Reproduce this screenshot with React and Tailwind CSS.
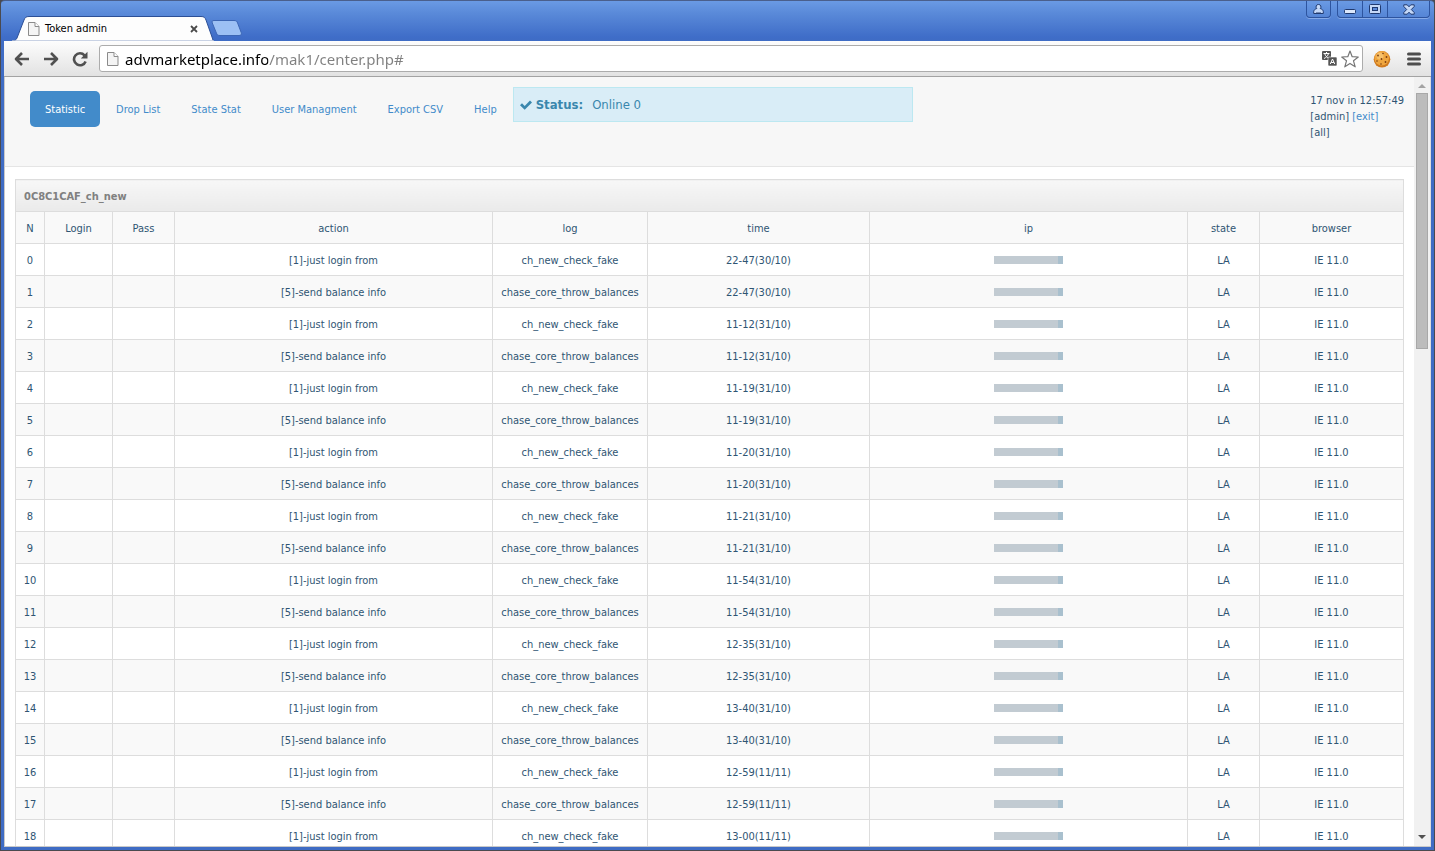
import React, { useState } from 'react';

const navItems = ['Statistic', 'Drop List', 'State Stat', 'User Managment', 'Export CSV', 'Help'];

const columns = [
  { label: 'N', width: 'w-[29px]' },
  { label: 'Login', width: 'w-[68px]' },
  { label: 'Pass', width: 'w-[62px]' },
  { label: 'action', width: '' },
  { label: 'log', width: 'w-[155px]' },
  { label: 'time', width: 'w-[222px]' },
  { label: 'ip', width: '' },
  { label: 'state', width: 'w-[72px]' },
  { label: 'browser', width: 'w-[144px]' },
];

// Each login check is followed by a balance report at the same time
const times = [
  '22-47(30/10)',
  '11-12(31/10)',
  '11-19(31/10)',
  '11-20(31/10)',
  '11-21(31/10)',
  '11-54(31/10)',
  '12-35(31/10)',
  '13-40(31/10)',
  '12-59(11/11)',
  '13-00(11/11)',
];

const rows = times.flatMap((time) => [
  { action: '[1]-just login from', log: 'ch_new_check_fake', time },
  { action: '[5]-send balance info', log: 'chase_core_throw_balances', time },
]).slice(0, 19);

const PageIcon = () => (
  <svg className="w-3 h-[15px] shrink-0" viewBox="0 0 12 15" fill="none">
    <path d="M.5 1.500h6.500l4 4v9H.5z" fill="#f4f4f4" stroke="#8b8b8b" />
    <path d="M7 1.500v4h4" fill="#fff" stroke="#8b8b8b" />
  </svg>
);

const WindowButtons = () => (
  <div className="flex h-[17px] mr-px gap-[6px]">
    <button aria-label="User" className="w-[25px] flex items-center justify-center border border-t-0 border-[#2d549f] rounded-b-[4px] shadow-[0_1px_0_#86aae8]">
      <svg className="w-[11px] h-[10px]" viewBox="0 0 11 10">
        <path d="M3 8.500h5M5.500.500a2.300 2.300 0 0 1 1.700 4C9 5 10 6 10.300 7.500v2H.700v-2C1 6 2 5 3.800 4.500a2.300 2.300 0 0 1 1.700-4z" fill="#c5d8f7" stroke="#203a70" />
        <path d="M2.500 8h6" stroke="#c5d8f7" />
      </svg>
    </button>
    <div className="flex border border-t-0 border-[#2d549f] rounded-b-[4px] shadow-[0_1px_0_#86aae8]">
      <button aria-label="Minimize" className="w-[25px] flex items-end justify-center pb-[2px] border-r border-[#2d549f]">
        <svg className="w-3 h-[6px]" viewBox="0 0 12 6">
          <rect x=".5" y=".5" width="11" height="4" rx="1" fill="#dbe7fb" stroke="#203a70" />
        </svg>
      </button>
      <button aria-label="Maximize" className="w-[25px] flex items-center justify-center border-r border-[#2d549f]">
        <svg className="w-3 h-[10px]" viewBox="0 0 12 10">
          <rect x=".5" y=".5" width="11" height="9" rx="1" fill="#c5d8f7" stroke="#203a70" />
          <rect x="3.500" y="3.500" width="5" height="3" fill="#5c8ada" stroke="#203a70" />
        </svg>
      </button>
      <button aria-label="Close" className="w-[41px] flex items-center justify-center">
        <svg className="w-3 h-[11px]" viewBox="0 0 12 11">
          <path d="M.8.800h3.400L6 2.800 7.800.800h3.400v1.700L8.300 5.500l2.900 3v1.700H7.800L6 8.200l-1.800 2H.800V8.500l2.900-3-2.900-3z" fill="#c5d8f7" stroke="#203a70" />
        </svg>
      </button>
    </div>
  </div>
);

const TitleBar = () => (
  <div className="flex justify-between h-10 pl-2">
    <div className="flex items-end">
      <div className="relative w-[202px] h-[25px] flex items-center pl-4 pr-3">
        <svg className="absolute inset-0 w-full h-full" viewBox="0 0 202 25" preserveAspectRatio="none">
          <path d="M0 25c3 0 4-1 5-3L12 4c1-2.500 2-3.500 5-3.500h172c3 0 4 1 5 3.500l6 17c1 3 1 4 2 4z" fill="#fdfdfd" stroke="#2c4f96" />
          <path d="M0 25.500h202" stroke="#fdfdfd" strokeWidth="2" />
        </svg>
        <div className="relative flex w-full items-center gap-[5px]">
          <PageIcon />
          <span className="flex-1 text-black">Token admin</span>
          <button aria-label="Close tab" className="p-1">
            <svg className="w-2 h-2" viewBox="0 0 8 8">
              <path d="M1 1l6 6M7 1L1 7" stroke="#4a4a4a" strokeWidth="1.800" />
            </svg>
          </button>
        </div>
      </div>
      <button aria-label="New tab" className="h-[21px] -ml-[3px] flex items-start">
        <svg className="w-8 h-4" viewBox="0 0 32 16">
          <path d="M3 .5h20c2 0 3 .7 3.600 2.500l3.600 9.500c.6 2-.2 3-2.200 3H9c-2 0-3-.7-3.600-2.500L1.300 3C.700 1.300 1.200.500 3 .500z" fill="#9cc0f4" stroke="#3c66b4" />
        </svg>
      </button>
    </div>
    <WindowButtons />
  </div>
);

const Cookie = () => (
  <svg className="w-[18px] h-[18px]" viewBox="0 0 18 18">
    <circle cx="9" cy="9.300" r="8.300" fill="#d07a1e" />
    <circle cx="8.700" cy="8.300" r="7.200" fill="#efa63f" />
    <circle cx="7" cy="6" r="3.500" fill="#f7c069" />
    <g fill="#7a3d12">
      <circle cx="5" cy="5.500" r=".9" />
      <circle cx="10" cy="3.500" r=".8" />
      <circle cx="13.500" cy="7" r=".9" />
      <circle cx="8.500" cy="9" r=".9" />
      <circle cx="4" cy="11" r=".8" />
      <circle cx="12.500" cy="12" r=".9" />
      <circle cx="8" cy="14" r=".8" />
    </g>
  </svg>
);

const Toolbar = () => {
  const [url, setUrl] = useState('advmarketplace.info/mak1/center.php#');

  return (
    <div className="flex items-center h-9 pl-[10px] pr-[10px] bg-linear-to-b from-[#fdfdfd] to-[#e2e2e2] border-b border-[#a3a3a3]">
      <div className="flex items-center gap-[13px] text-[#505050]">
        <button aria-label="Back">
          <svg className="w-4 h-4" viewBox="0 0 16 16" fill="none" stroke="currentColor" strokeWidth="2.600">
            <path d="M8 2L2 8l6 6M2.500 8H15" strokeLinejoin="round" />
          </svg>
        </button>
        <button aria-label="Forward">
          <svg className="w-4 h-4" viewBox="0 0 16 16" fill="none" stroke="currentColor" strokeWidth="2.600">
            <path d="M8 2l6 6-6 6M13.500 8H1" strokeLinejoin="round" />
          </svg>
        </button>
        <button aria-label="Reload">
          <svg className="w-4 h-4" viewBox="0 0 16 16">
            <path d="M12.500 4.300A6 6 0 1 0 13.600 10.500" fill="none" stroke="currentColor" strokeWidth="2.600" />
            <path d="M15.500.800v6.700H8.800z" fill="currentColor" />
          </svg>
        </button>
      </div>
      <div className="flex flex-1 items-center h-[27px] ml-[11px] pl-[7px] pr-[3px] gap-[6px] bg-white border border-[#acacac] rounded-[3px]">
        <PageIcon />
        <input
          aria-label="Address"
          value={url}
          onChange={(e) => setUrl(e.target.value)}
          className="flex-1 min-w-0 h-6 font-['Noto_Sans',sans-serif] text-[15px] outline-none text-transparent bg-clip-text bg-[linear-gradient(90deg,#000_143px,#808080_143px)]"
        />
        <button aria-label="Translate">
          <svg className="w-[15px] h-[15px]" viewBox="0 0 15 15">
            <rect x="0" y="0" width="9" height="9" rx="1" fill="#555" />
            <path d="M1.500 2.500h6M4.500 1v1.500M6.500 2.500C6 5 4 6.500 2 7.500M2.800 3c.7 2 2.200 3.500 4.200 4.300" stroke="#fff" fill="none" />
            <rect x="6" y="6" width="9" height="9" rx="1" fill="#555" stroke="#fff" strokeWidth=".6" />
            <path d="M8.300 13l2.200-5 2.200 5M9.100 11.500h2.800" stroke="#fff" fill="none" />
          </svg>
        </button>
        <button aria-label="Bookmark" className="-ml-[2px]">
          <svg className="w-[18px] h-[18px]" viewBox="0 0 18 18">
            <path d="M9 1l2.200 5.700 6.100.3-4.800 3.800 1.700 6L9 13.400 3.800 16.800l1.700-6L.700 7l6.100-.3z" fill="#fff" stroke="#777" strokeWidth="1.200" strokeLinejoin="round" />
          </svg>
        </button>
      </div>
      <button aria-label="Cookies" className="ml-[10px]">
        <Cookie />
      </button>
      <button aria-label="Menu" className="ml-4">
        <svg className="w-[14px] h-[14px]" viewBox="0 0 14 14">
          <path d="M1.500 2h11M1.500 7h11M1.500 12h11" stroke="#4d4d4d" strokeWidth="3" strokeLinecap="round" />
        </svg>
      </button>
    </div>
  );
};

const PageHeader = () => (
  <header className="flex items-start h-[90px] pl-[25px] pr-[10px] bg-[#f7f7f7] border-b border-[#e5e5e5]">
    <nav className="flex gap-px mt-[14px]">
      {navItems.map((item, i) => (
        <a
          key={item}
          href="#"
          className={`px-[15px] pt-[11px] pb-[9px] rounded-[5px] whitespace-nowrap ${i === 0 ? 'bg-[#428bca] text-white' : 'text-[#428bca]'}`}
        >
          {item}
        </a>
      ))}
    </nav>
    <div className="flex items-center w-[400px] h-[35px] mt-[10px] ml-px px-[6px] bg-[#d9edf7] border border-[#bce8f1] text-[13px] text-[#3a87ad]">
      <svg className="w-3 h-[10px] mr-1" viewBox="0 0 12 10">
        <path d="M0 5.300L2 3.300l2.700 2.600L10 .500l2 2-7.300 7.200z" fill="currentColor" />
      </svg>
      <strong className="mr-[9px]">Status:</strong>
      <span>Online 0</span>
    </div>
    <div className="ml-auto mt-4 whitespace-nowrap">
      <p>17 nov in 12:57:49</p>
      <p>[admin] <a href="#" className="text-[#428bca]">[exit]</a></p>
      <p>[all]</p>
    </div>
  </header>
);

const Cell = ({ children }) => (
  <td className="pt-[2px] border border-[#dddddd]">{children}</td>
);

const LogTable = () => (
  <table className="w-full table-fixed border-collapse text-center">
    <colgroup>
      {columns.map((col) => (
        <col key={col.label} className={col.width} />
      ))}
    </colgroup>
    <thead>
      <tr className="h-8">
        <th colSpan={9} className="px-2 pt-[2px] text-left font-bold text-[#808080] border border-[#dddddd] bg-linear-to-b from-[#f7f7f7] to-[#eaeaea]">
          0C8C1CAF_ch_new
        </th>
      </tr>
      <tr className="h-8 bg-[#f9f9f9]">
        {columns.map((col) => (
          <th key={col.label} className="pt-[2px] font-normal border border-[#dddddd]">{col.label}</th>
        ))}
      </tr>
    </thead>
    <tbody>
      {rows.map((row, i) => (
        <tr key={i} className="h-8 even:bg-[#f9f9f9]">
          <Cell>{i}</Cell>
          <Cell />
          <Cell />
          <Cell>{row.action}</Cell>
          <Cell>{row.log}</Cell>
          <Cell>{row.time}</Cell>
          <td className="border border-[#dddddd]">
            <div className="w-[69px] h-2 mx-auto bg-[#c2cbd2] border-r-[5px] border-[#a9c0ce]" />
          </td>
          <Cell>LA</Cell>
          <Cell>IE 11.0</Cell>
        </tr>
      ))}
    </tbody>
  </table>
);

const Scrollbar = () => (
  <div className="flex flex-col items-center w-[17px] shrink-0 bg-[#f1f1f1] border-r border-[#dcdcdc]">
    <svg className="w-2 h-4 shrink-0" viewBox="0 0 8 16">
      <path d="M4 7l4 4H0z" fill="#a3a3a3" />
    </svg>
    <div className="w-3 h-64 bg-[#bcbcbc] border border-[#a8a8a8]" />
    <svg className="w-2 h-4 mt-auto shrink-0" viewBox="0 0 8 16">
      <path d="M0 5h8L4 9z" fill="#505050" />
    </svg>
  </div>
);

const App = () => {
  return (
    <div className="h-screen bg-[#4a4a4f] px-px pb-px font-['DejaVu_Sans_Condensed','DejaVu_Sans',sans-serif] text-[11px] leading-4 text-[#2f5573]">
      <div className="flex flex-col h-full px-[3px] pb-[3px] border-t border-[#4a5f8c] rounded-t-[4px] bg-[#3f6cc4] bg-[linear-gradient(#6a9ae4_0px,#5a8ad9_12px,#3f6dc8_36px,#3f6cc4_41px)] overflow-hidden">
        <TitleBar />
        <Toolbar />
        <div className="flex flex-1 min-h-0 border-b border-l border-[#c9c9c9] bg-white overflow-hidden">
          <main className="flex-1 min-w-0 overflow-hidden">
            <PageHeader />
            <div className="px-[10px] pt-3">
              <LogTable />
            </div>
          </main>
          <Scrollbar />
        </div>
      </div>
    </div>
  );
};

export default App;
